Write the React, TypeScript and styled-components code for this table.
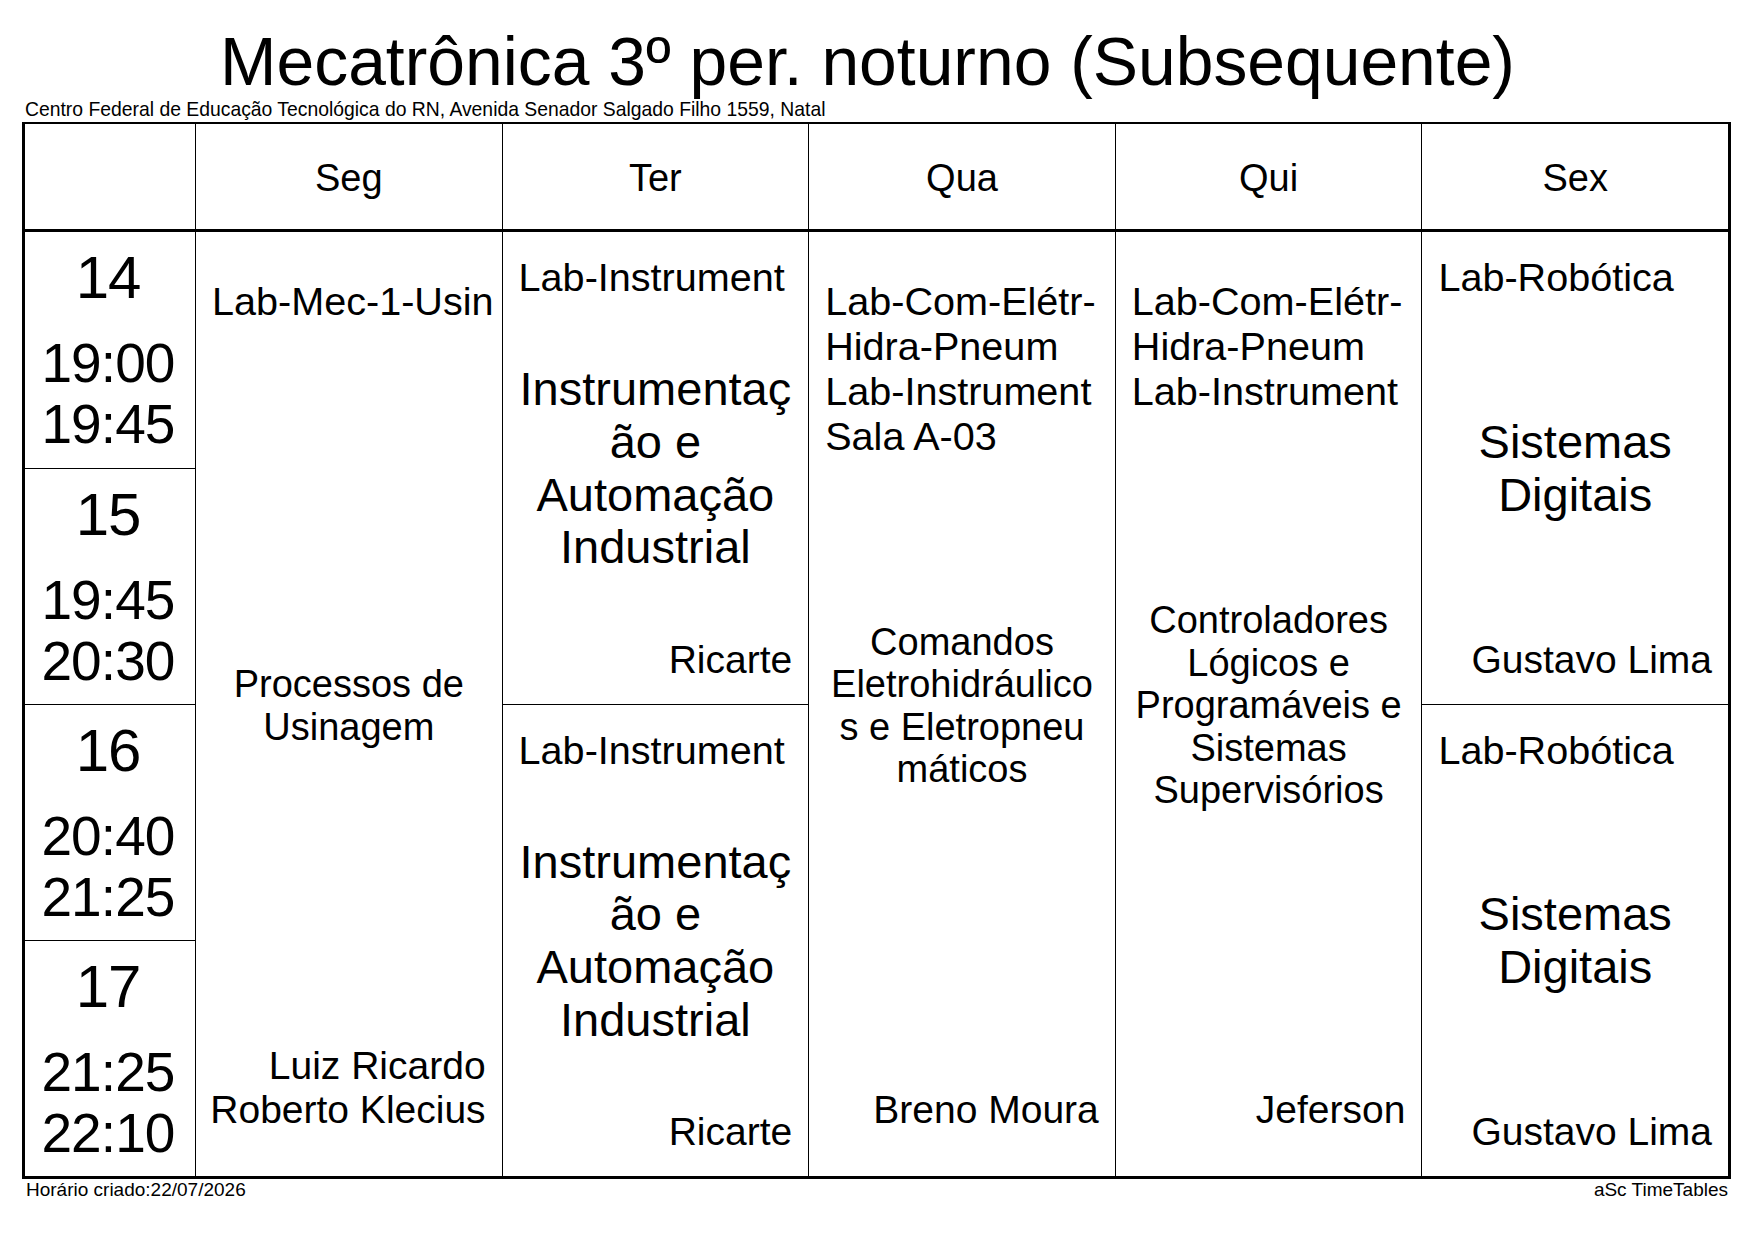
import React from 'react';
import styled, { createGlobalStyle } from 'styled-components';

const GlobalStyle = createGlobalStyle`
  body {
    margin: 0;
    background: #fff;
    color: #000;
    font-family: "Liberation Sans", Arial, sans-serif;
  }
`;

const Page = styled.div`
  width: 1755px;
  height: 1241px;
  padding-left: 22px;
  box-sizing: border-box;
  overflow: hidden;
`;

const Sheet = styled.div`
  width: 1709px;
`;

const Title = styled.h1`
  margin: 0;
  padding: 29px 18px 0 0;
  font-size: 67.8px;
  line-height: 66px;
  font-weight: normal;
  text-align: center;
  white-space: nowrap;
`;

const Address = styled.div`
  margin-top: 5px;
  padding-left: 3px;
  font-size: 19.35px;
  line-height: 19px;
`;

const Table = styled.div`
  margin-top: 3px;
  display: grid;
  grid-template-columns: 170px repeat(5, minmax(0, 1fr));
  grid-template-rows: 108px repeat(4, 236px);
  border: 3px solid #000;
  border-top-width: 2px;
`;

const CornerCell = styled.div`
  border-bottom: 3px solid #000;
`;

const DayCell = styled.div`
  display: flex;
  align-items: center;
  justify-content: center;
  border-left: 1px solid #000;
  border-bottom: 3px solid #000;
  font-size: 38px;
  padding-top: 3px;
`;

const PeriodCell = styled.div<{ $first: boolean }>`
  display: flex;
  flex-direction: column;
  align-items: center;
  padding: 16px 5px 0 0;
  border-top: ${(p) => (p.$first ? 'none' : '1px solid #000')};
`;

const PeriodNumber = styled.div`
  font-size: 60px;
  line-height: 60px;
  letter-spacing: -1px;
  margin-right: -1px;
`;

const PeriodTimes = styled.div`
  margin-top: 25px;
  font-size: 55px;
  line-height: 61.4px;
  letter-spacing: -0.9px;
  margin-right: -0.9px;
  text-align: center;
`;

const LessonCell = styled.div<{ $col: number; $row: number; $span: number; $top: number; $bottom: number }>`
  grid-column: ${(p) => p.$col};
  grid-row: ${(p) => p.$row} / span ${(p) => p.$span};
  display: grid;
  grid-template: minmax(0, 1fr) / minmax(0, 1fr);
  padding: ${(p) => p.$top}px 16px ${(p) => p.$bottom}px;
  border-left: 1px solid #000;
  border-top: ${(p) => (p.$row > 2 ? '1px solid #000' : 'none')};
  white-space: nowrap;
  min-width: 0;
`;

const Room = styled.div`
  grid-area: 1 / 1;
  align-self: start;
  justify-self: start;
  font-size: 39.6px;
  line-height: 45px;
`;

const Subject = styled.div<{ $size: 'lg' | 'md' }>`
  grid-area: 1 / 1;
  align-self: center;
  justify-self: center;
  text-align: center;
  font-size: ${(p) => (p.$size === 'lg' ? '47px' : '38px')};
  line-height: ${(p) => (p.$size === 'lg' ? '52.6px' : '42.5px')};
`;

const Teacher = styled.div`
  grid-area: 1 / 1;
  align-self: end;
  justify-self: end;
  text-align: right;
  font-size: 39px;
  line-height: 44px;
`;

const Footer = styled.div`
  display: flex;
  justify-content: space-between;
  padding: 1px 3px 0 4px;
  font-size: 19px;
  line-height: 19px;
`;

const days = ['Seg', 'Ter', 'Qua', 'Qui', 'Sex'];

const periods = [
  { n: '14', start: '19:00', end: '19:45' },
  { n: '15', start: '19:45', end: '20:30' },
  { n: '16', start: '20:40', end: '21:25' },
  { n: '17', start: '21:25', end: '22:10' },
];

type Lesson = {
  day: number;
  row: number;
  span: number;
  room: string[];
  subject: string[];
  size: 'lg' | 'md';
  teacher: string[];
};

const instrumentacao = ['Instrumentaç', 'ão e', 'Automação', 'Industrial'];
const labCom = ['Lab-Com-Elétr-', 'Hidra-Pneum', 'Lab-Instrument'];

const lessons: Lesson[] = [
  {
    day: 0, row: 0, span: 4,
    room: ['Lab-Mec-1-Usin'],
    subject: ['Processos de', 'Usinagem'],
    size: 'md',
    teacher: ['Luiz Ricardo', 'Roberto Klecius'],
  },
  { day: 1, row: 0, span: 2, room: ['Lab-Instrument'], subject: instrumentacao, size: 'lg', teacher: ['Ricarte'] },
  { day: 1, row: 2, span: 2, room: ['Lab-Instrument'], subject: instrumentacao, size: 'lg', teacher: ['Ricarte'] },
  {
    day: 2, row: 0, span: 4,
    room: [...labCom, 'Sala A-03'],
    subject: ['Comandos', 'Eletrohidráulico', 's e Eletropneu', 'máticos'],
    size: 'md',
    teacher: ['Breno Moura'],
  },
  {
    day: 3, row: 0, span: 4,
    room: labCom,
    subject: ['Controladores', 'Lógicos e', 'Programáveis e', 'Sistemas', 'Supervisórios'],
    size: 'md',
    teacher: ['Jeferson'],
  },
  { day: 4, row: 0, span: 2, room: ['Lab-Robótica'], subject: ['Sistemas', 'Digitais'], size: 'lg', teacher: ['Gustavo Lima'] },
  { day: 4, row: 2, span: 2, room: ['Lab-Robótica'], subject: ['Sistemas', 'Digitais'], size: 'lg', teacher: ['Gustavo Lima'] },
];

const Lines: React.FC<{ items: string[] }> = ({ items }) => (
  <>
    {items.map((line, i) => (
      <div key={i}>{line}</div>
    ))}
  </>
);

const App: React.FC = () => {
  return (
    <Page>
      <GlobalStyle />
      <Sheet>
        <Title>Mecatrônica 3º per. noturno (Subsequente)</Title>
        <Address>Centro Federal de Educação Tecnológica do RN, Avenida Senador Salgado Filho 1559, Natal</Address>
        <Table>
          <CornerCell />
          {days.map((d) => (
            <DayCell key={d}>{d}</DayCell>
          ))}
          {periods.map((p, i) => (
            <PeriodCell key={p.n} $first={i === 0} style={{ gridColumn: 1, gridRow: i + 2 }}>
              <PeriodNumber>{p.n}</PeriodNumber>
              <PeriodTimes>
                {p.start}
                <br />
                {p.end}
              </PeriodTimes>
            </PeriodCell>
          ))}
          {lessons.map((l) => (
            <LessonCell
              key={`${l.day}-${l.row}`}
              $col={l.day + 2}
              $row={l.row + 2}
              $span={l.span}
              $top={l.span === 4 ? 47 : 23}
              $bottom={l.span === 4 ? 44 : 22}
            >
              <Room>
                <Lines items={l.room} />
              </Room>
              <Subject $size={l.size}>
                <Lines items={l.subject} />
              </Subject>
              <Teacher>
                <Lines items={l.teacher} />
              </Teacher>
            </LessonCell>
          ))}
        </Table>
        <Footer>
          <span>Horário criado:22/07/2026</span>
          <span>aSc TimeTables</span>
        </Footer>
      </Sheet>
    </Page>
  );
};

export default App;
